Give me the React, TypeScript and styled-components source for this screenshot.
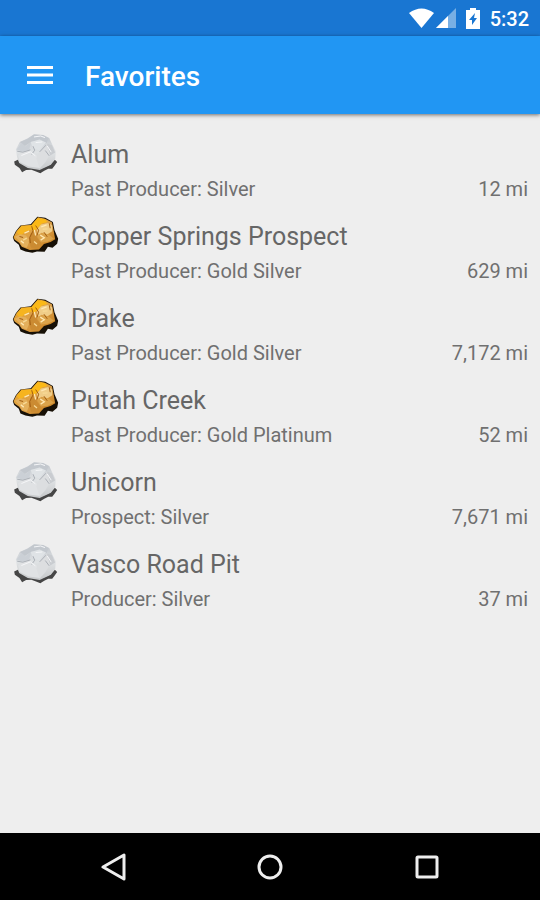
import React from 'react';
import styled, { createGlobalStyle } from 'styled-components';

const GlobalStyle = createGlobalStyle`
  *, *::before, *::after { box-sizing: border-box; }
  body { margin: 0; background: #eeeeee; font-family: Roboto, "Noto Sans", sans-serif; }
`;

const Screen = styled.div`
  display: flex;
  flex-direction: column;
  min-height: 100vh;
  background: #eeeeee;
`;

const StatusBar = styled.div`
  display: flex;
  align-items: center;
  justify-content: flex-end;
  height: 36px;
  padding: 0 11px 0 12px;
  background: #1976d2;
  color: #ffffff;
`;

const StatusIcons = styled.div`
  display: flex;
  align-items: center;
  gap: 2px;
  margin-right: 10px;
`;

const BatterySlot = styled.span`
  display: flex;
  margin-left: 8px;
`;

const Clock = styled.time`
  font-size: 20px;
  line-height: 24px;
  font-weight: 500;
  padding-top: 2px;
`;

const AppBar = styled.header`
  display: flex;
  align-items: center;
  gap: 25px;
  height: 78px;
  padding: 0 20px;
  background: #2196f3;
  color: #ffffff;
  box-shadow: 0 1px 4px rgba(0, 0, 0, 0.55);
`;

const IconButton = styled.button`
  display: flex;
  align-items: center;
  justify-content: center;
  width: 40px;
  height: 40px;
  padding: 0;
  border: 0;
  background: transparent;
  color: inherit;
  cursor: pointer;
`;

const Title = styled.h1`
  margin: 0;
  padding-top: 4px;
  font-size: 28px;
  line-height: 32px;
  font-weight: 500;
`;

const List = styled.ul`
  flex: 1;
  margin: 0;
  padding: 18px 0;
  list-style: none;
`;

const Row = styled.li`
  display: flex;
  gap: 11px;
  height: 82px;
  padding: 0 12px;
`;

const Details = styled.div`
  flex: 1;
  min-width: 0;
`;

const Name = styled.h2`
  margin: 0;
  padding-top: 8px;
  font-size: 25px;
  line-height: 30px;
  font-weight: 400;
  color: #666666;
`;

const Meta = styled.div`
  display: flex;
  justify-content: space-between;
  padding-top: 7px;
  font-size: 20px;
  line-height: 24px;
  color: #707070;
`;

const NavBar = styled.nav`
  display: flex;
  align-items: center;
  justify-content: space-around;
  height: 67px;
  padding: 0 35px;
  background: #000000;
  color: #eeeeee;
`;

const NavButton = styled(IconButton)`
  flex: 0 0 48px;
  height: 48px;
`;

type Mineral = 'silver' | 'gold';

const SilverOre = () => (
  <svg width="48" height="43" viewBox="36 20 144 130" aria-hidden="true">
    <defs>
      <linearGradient id="silverBody" x1="0" y1="0" x2="0" y2="1">
        <stop offset="0" stopColor="#c0c5cb" />
        <stop offset="0.5" stopColor="#dfe2e4" />
        <stop offset="1" stopColor="#c6c8ca" />
      </linearGradient>
    </defs>
    <path d="M42 109 L53 104 L70 118 L92 126 L124 130 L151 118 L165 104 L172 111 L164 122 L157 131 L145 131 L133 137 L121 145 L110 140 L94 134 L78 135 L66 142 L58 129 L44 119Z" fill="#464646" />
    <path d="M47 73 L59 50 L82 40 L102 27 L130 29 L148 38 L157 58 L168 79 L166 102 L153 119 L119 135 L83 129 L57 114 L51 96Z" fill="url(#silverBody)" />
    <path d="M60 50 L83 41 L103 30 L130 31 L146 39 L140 53 L119 43 L92 50 L74 62Z" fill="#c3c8ce" />
    <path d="M49 73 L64 53 L76 64 L92 50 L88 73 L67 80Z" fill="#cbd0d6" />
    <path d="M92 50 L119 43 L138 52 L118 75 L99 70Z" fill="#dfe3e6" />
    <path d="M67 82 L90 76 L112 92 L120 129 L86 124 L58 110 L54 91Z" fill="#e0e2e4" />
    <path d="M118 80 L141 57 L150 88 L137 111 L119 130 L109 100Z" fill="#dcdee0" />
    <path d="M141 55 L156 60 L166 82 L151 91Z" fill="#c9ccd0" />
    <path d="M51 78 L68 81 L91 74 M99 63 L104 75 L95 88 M119 80 L138 60 M136 76 L148 92" fill="none" stroke="#aaafb6" strokeWidth="3" />
    <path d="M102 35 L122 32 L135 37 M107 52 L127 50 M64 91 L91 80 L106 92 M142 62 L154 81" fill="none" stroke="#f5f6f8" strokeWidth="3" />
  </svg>
);

const GoldOre = () => (
  <svg width="48" height="43" viewBox="36 20 144 130" aria-hidden="true">
    <defs>
      <linearGradient id="goldBody" x1="0" y1="0" x2="1" y2="1">
        <stop offset="0" stopColor="#eda51c" />
        <stop offset="0.5" stopColor="#dca04a" />
        <stop offset="1" stopColor="#c47b18" />
      </linearGradient>
    </defs>
    <path d="M38 90 L47 72 L61 55 L92 51 L112 28 L136 31 L159 44 L164 69 L175 95 L172 110 L158 122 L144 119 L134 134 L111 133 L97 137 L76 133 L61 127 L56 113 L42 102Z" fill="#171006" />
    <path d="M40 90 L49 72 L64 55 L94 53 L114 30 L135 34 L156 45 L161 69 L166 96 L152 105 L132 111 L117 127 L89 129 L65 119 L57 107 L44 98Z" fill="url(#goldBody)" />
    <path d="M50 74 L64 57 L93 54 L99 66 L78 72 L59 87Z" fill="#f6b41f" />
    <path d="M44 89 L60 81 L78 85 L89 100 L80 122 L66 116 L58 102Z" fill="#e4b05c" />
    <path d="M94 54 L113 33 L134 35 L143 44 L126 49 L114 62 L99 73Z" fill="#fbb917" />
    <path d="M123 52 L145 47 L157 55 L157 72 L143 81 L125 77 L113 86 L111 67Z" fill="#f0cd88" />
    <path d="M111 83 L127 78 L147 83 L162 95 L143 104 L121 106Z" fill="#dba34a" />
    <path d="M91 80 L105 70 L111 91 L123 107 L113 124 L93 122 L86 103Z" fill="#cb8b32" />
    <path d="M73 78 L87 72 M124 59 L140 53 M121 84 L133 92 L122 99 M103 68 L107 85 M62 101 L71 108" fill="none" stroke="#ffe8b3" strokeWidth="4" />
    <path d="M95 57 L99 71 L89 91 L91 108 M107 55 L116 69 L111 85 M132 75 L142 89 M148 48 L151 63 M58 88 L69 91" fill="none" stroke="#a05c10" strokeWidth="3" />
    <path d="M128 66 L143 65 M69 99 L80 93 M102 103 L111 111" fill="none" stroke="#f7d995" strokeWidth="4" />
  </svg>
);

const WifiIcon = () => (
  <svg width="25" height="20" viewBox="0 0 25 20" aria-hidden="true">
    <path d="M0 5 Q12.500 -4 25 5 L12.500 20Z" fill="#ffffff" />
  </svg>
);

const SignalIcon = () => (
  <svg width="20" height="20" viewBox="0 0 20 20" aria-hidden="true">
    <path d="M0 20 L20 0 V20Z" fill="#78afe4" />
    <path d="M0 20 L12 8 V20Z" fill="#ffffff" />
  </svg>
);

const BatteryIcon = () => (
  <svg width="14" height="21" viewBox="0 0 14 21" aria-hidden="true">
    <path d="M4 0 H10 V2 H14 V21 H0 V2 H4Z" fill="#ffffff" />
    <path d="M9 5 L3 12 H6 V17 L11 10 H8Z" fill="#1976d2" />
  </svg>
);

const favorites: { name: string; info: string; distance: string; mineral: Mineral }[] = [
  { name: 'Alum', info: 'Past Producer: Silver', distance: '12 mi', mineral: 'silver' },
  { name: 'Copper Springs Prospect', info: 'Past Producer: Gold Silver', distance: '629 mi', mineral: 'gold' },
  { name: 'Drake', info: 'Past Producer: Gold Silver', distance: '7,172 mi', mineral: 'gold' },
  { name: 'Putah Creek', info: 'Past Producer: Gold Platinum', distance: '52 mi', mineral: 'gold' },
  { name: 'Unicorn', info: 'Prospect: Silver', distance: '7,671 mi', mineral: 'silver' },
  { name: 'Vasco Road Pit', info: 'Producer: Silver', distance: '37 mi', mineral: 'silver' },
];

export default function App() {
  return (
    <>
      <GlobalStyle />
      <Screen>
        <StatusBar>
          <StatusIcons>
            <WifiIcon />
            <SignalIcon />
            <BatterySlot><BatteryIcon /></BatterySlot>
          </StatusIcons>
          <Clock>5:32</Clock>
        </StatusBar>
        <AppBar>
          <IconButton type="button" aria-label="Open menu">
            <svg width="26" height="18" viewBox="0 0 26 18" aria-hidden="true">
              <path d="M0 1.500H26M0 9H26M0 16.500H26" stroke="currentColor" strokeWidth="3" />
            </svg>
          </IconButton>
          <Title>Favorites</Title>
        </AppBar>
        <List>
          {favorites.map(({ name, info, distance, mineral }) => (
            <Row key={name}>
              {mineral === 'gold' ? <GoldOre /> : <SilverOre />}
              <Details>
                <Name>{name}</Name>
                <Meta>
                  <span>{info}</span>
                  <span>{distance}</span>
                </Meta>
              </Details>
            </Row>
          ))}
        </List>
        <NavBar aria-label="System navigation">
          <NavButton type="button" aria-label="Back">
            <svg width="26" height="28" viewBox="0 0 26 28" aria-hidden="true">
              <path d="M3 14 L24 2 V26Z" fill="none" stroke="currentColor" strokeWidth="3" strokeLinejoin="round" />
            </svg>
          </NavButton>
          <NavButton type="button" aria-label="Home">
            <svg width="26" height="26" viewBox="0 0 26 26" aria-hidden="true">
              <circle cx="13" cy="13" r="11" fill="none" stroke="currentColor" strokeWidth="3" />
            </svg>
          </NavButton>
          <NavButton type="button" aria-label="Recent apps">
            <svg width="24" height="24" viewBox="0 0 24 24" aria-hidden="true">
              <rect x="2" y="2" width="20" height="20" rx="1" fill="none" stroke="currentColor" strokeWidth="3" />
            </svg>
          </NavButton>
        </NavBar>
      </Screen>
    </>
  );
}
